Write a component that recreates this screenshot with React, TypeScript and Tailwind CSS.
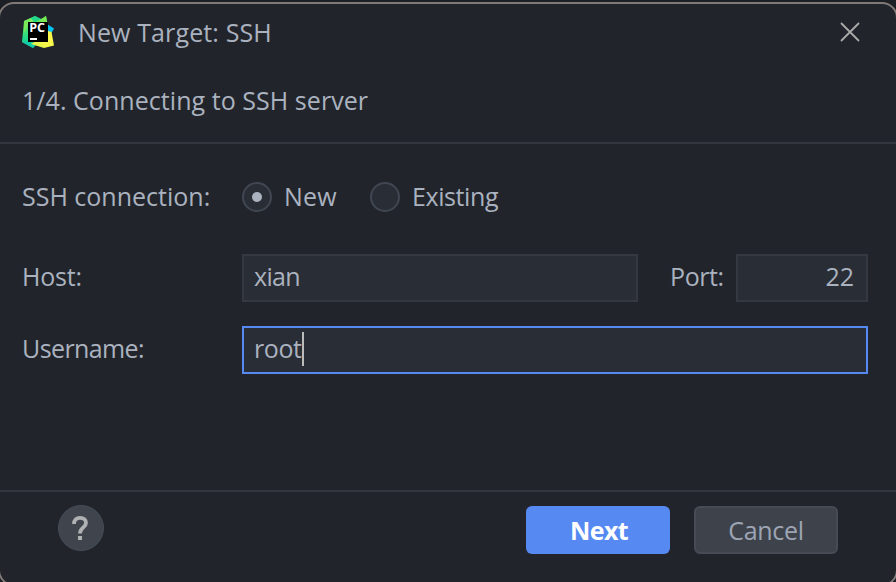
import type { ReactNode } from "react";

function PyCharmLogo() {
  return (
    <svg width="32" height="32" viewBox="0 0 32 32" className="mb-[2px] shrink-0">
      <defs>
        <linearGradient id="pcGreen" x1="0" y1="0" x2="0" y2="1">
          <stop offset="0" stopColor="#2fdc7c" />
          <stop offset="0.35" stopColor="#55e365" />
          <stop offset="0.7" stopColor="#21d789" />
          <stop offset="1" stopColor="#1fd09a" />
        </linearGradient>
        <linearGradient id="pcYellow" x1="0" y1="1" x2="1" y2="0">
          <stop offset="0" stopColor="#c9f04a" />
          <stop offset="0.4" stopColor="#f6f74a" />
          <stop offset="1" stopColor="#fcf84a" />
        </linearGradient>
      </defs>
      <path d="M25 8 L32 12.5 L29.5 17 L25 20 Z" fill="#07c3f2" />
      <path d="M2 5 L13 0 L19 3 L24 0 L26 10 L26 22 L14 29 L11 32 L0 26 Z" fill="url(#pcGreen)" />
      <path d="M2 5 L9 2 L12 5 L6 9 L2 17 Z" fill="#7be85a" />
      <path d="M9 2 L13 0 L19 3 L12 6 Z" fill="#21d789" />
      <path d="M15 6 L24 0 L25.5 8 Z" fill="#7be950" />
      <path d="M0 26 L6 25 L13 29 L11 32 Z" fill="#12c9a8" />
      <path d="M26 15 L29.5 16 L32 29.5 L22 32 L9 28 L14 25 Z" fill="url(#pcYellow)" />
      <rect x="6" y="6" width="20" height="20" fill="#000" />
      <text x="7.2" y="16" fontSize="11.6" fontWeight="700" textLength="15.8" lengthAdjust="spacingAndGlyphs" fill="#fff" fontFamily="'Open Sans', sans-serif">PC</text>
      <rect x="8" y="22" width="7" height="2" fill="#fff" />
    </svg>
  );
}

function Radio({ checked }: { checked?: boolean }) {
  return (
    <span className="flex size-[30px] shrink-0 items-center justify-center rounded-full border-2 border-[#414752] bg-[#292d35]">
      {checked && <span className="size-[10px] rounded-full bg-[#abb2bf]" />}
    </span>
  );
}

function Label({ children }: { children: ReactNode }) {
  return <div className="w-[241px] shrink-0 pl-[22px]">{children}</div>;
}

export default function App() {
  return (
    <div className="h-[582px] w-[896px] overflow-hidden bg-[#1c1f24] pt-[2px] font-['Open_Sans',sans-serif] text-[25px] leading-[34px] text-[#abb2bf]">
      <div className="-ml-[2px] h-[584px] w-[900px] rounded-[16px] border-2 border-[#807977] bg-[#21252b]">
        <header className="flex h-[58px] items-center pl-[22px] pr-[35px]">
          <PyCharmLogo />
          <h1 className="mb-[2px] ml-[24px] grow tracking-[0.12px]">New Target: SSH</h1>
          <svg width="22" height="22" viewBox="0 0 22 22" className="mb-[2px] shrink-0">
            <path d="M2 2 L20 20 M20 2 L2 20" stroke="#aaaaaa" strokeWidth="1.8" />
          </svg>
        </header>
        <div className="flex h-[82px] items-center border-b-2 border-[#32363f] pb-[4px] pl-[22px] tracking-[0.05px]">
          1/4. Connecting to SSH server
        </div>
        <main className="h-[346px] pt-[38px]">
          <div className="flex h-[30px] items-center">
            <Label><span className="mb-[2px] block">SSH connection:</span></Label>
            <div className="flex w-[128px] items-center gap-[12px] pl-px">
              <Radio checked />
              <span className="mb-[2px] tracking-[0.2px]">New</span>
            </div>
            <div className="flex items-center gap-[12px] pl-px">
              <Radio />
              <span className="mb-[2px] tracking-[-0.4px]">Existing</span>
            </div>
          </div>
          <div className="mt-[42px] flex h-[48px] items-center">
            <Label><span className="mb-[4px] block tracking-[-0.2px]">Host:</span></Label>
            <div className="ml-px flex h-full w-[396px] items-center border-2 border-[#333841] bg-[#292d35] pb-[4px] pl-[10px] tracking-[-0.7px]">xian</div>
            <div className="w-[98px] pb-[4px] pl-[32px] tracking-[-0.4px]">Port:</div>
            <div className="flex h-full w-[132px] items-center justify-end border-2 border-[#333841] bg-[#292d35] pb-[4px] pr-[12px]">22</div>
          </div>
          <div className="mt-[24px] flex h-[48px] items-center">
            <Label><span className="mb-[4px] block tracking-[-0.6px]">Username:</span></Label>
            <div className="ml-px flex h-full w-[626px] items-center border-2 border-[#568af2] bg-[#292d35] pb-[2px] pl-[10px]">
              <span className="w-[48px] pb-[2px] tracking-[-0.4px]">root</span>
              <span className="h-[34px] w-[2px] bg-[#bbbbbb]" />
            </div>
          </div>
        </main>
        <footer className="flex items-start border-t-2 border-[#32363f] pt-[14px]">
          <button className="-mt-px ml-[58px] flex size-[46px] items-center justify-center rounded-full border border-[#454d58] bg-[#40454d] pr-[2px]">
            <svg width="18" height="26" viewBox="0 0 18 26">
              <path d="M3 9 C3 4.8 5.5 2.8 9 2.8 C12.7 2.8 15 5 15 8 C15 12.5 9 12.5 9 18.5" fill="none" stroke="#afb1b3" strokeWidth="3.8" />
              <rect x="7" y="21" width="4" height="4" fill="#afb1b3" />
            </svg>
          </button>
          <button className="ml-[422px] h-[48px] w-[144px] rounded-[6px] bg-[#568af2] pl-[2px] font-bold tracking-[-0.6px] text-white">Next</button>
          <button className="ml-[24px] h-[48px] w-[144px] rounded-[6px] border-2 border-[#464b55] bg-[#3d424b] tracking-[-0.3px] text-[#9da5b4]">Cancel</button>
        </footer>
      </div>
    </div>
  );
}
